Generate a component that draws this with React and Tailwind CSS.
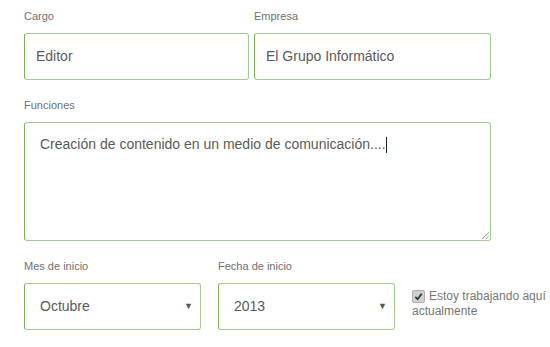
import React from "react";

const font = { fontFamily: '"Liberation Sans", Arial, sans-serif' };

function Label({ children }) {
  return (
    <div className="text-[11px] leading-[13px] text-[#707070] mb-[10px]">
      {children}
    </div>
  );
}

function Field({ value }) {
  return (
    <div className="h-[47px] flex items-center pl-[11px] rounded-[3px] border border-[#a2cc8f] border-l-[#78b356] bg-white text-[14px] text-[#5a5a5a]">
      {value}
    </div>
  );
}

function Select({ value }) {
  return (
    <div className="h-[47px] w-[177px] flex items-center justify-between pl-[15px] pr-[7px] rounded-[3px] border border-[#a2cc8f] border-l-[#78b356] bg-white text-[14px] text-[#5a5a5a]">
      <span>{value}</span>
      <span className="text-[9px] text-[#555]">▼</span>
    </div>
  );
}

export default function App() {
  return (
    <div style={font} className="w-[550px] h-[347px] bg-white pl-[24px] pt-[10px] overflow-hidden">
      <div className="flex gap-[5px]">
        <div className="w-[225px]">
          <Label>Cargo</Label>
          <Field value="Editor" />
        </div>
        <div className="w-[237px]">
          <Label>Empresa</Label>
          <Field value="El Grupo Informático" />
        </div>
      </div>

      <div className="mt-[19px]">
        <Label>Funciones</Label>
        <div className="relative w-[467px] h-[119px] rounded-[3px] border border-[#a2cc8f] border-l-[#78b356] bg-white pl-[15px] pt-[11px] text-[14px] leading-[20px] text-[#5a5a5a]">
          Creación de contenido en un medio de comunicación....
          <span className="inline-block w-px h-[16px] bg-[#222] align-middle" />
          <svg
            className="absolute right-[1px] bottom-[1px]"
            width="8"
            height="8"
            viewBox="0 0 8 8"
          >
            <path d="M8 1 L1 8 M8 5 L5 8" stroke="#aaa" strokeWidth="1" />
          </svg>
        </div>
      </div>

      <div className="mt-[19px] flex">
        <div className="w-[194px]">
          <Label>Mes de inicio</Label>
          <Select value="Octubre" />
        </div>
        <div className="w-[194px]">
          <Label>Fecha de inicio</Label>
          <Select value="2013" />
        </div>
        <div className="pt-[29px] text-[12px] leading-[15px] text-[#777]">
          <span className="inline-flex w-[13px] h-[13px] mr-[4px] items-center justify-center rounded-[2px] bg-[#cfcfcf] border border-[#b0b0b0] align-[-1px]">
            <svg width="9" height="9" viewBox="0 0 10 10">
              <path d="M1.5 5.5 L4 8 L8.5 2" stroke="#333" strokeWidth="2" fill="none" />
            </svg>
          </span>
          Estoy trabajando aquí
          <br />
          actualmente
        </div>
      </div>
    </div>
  );
}
